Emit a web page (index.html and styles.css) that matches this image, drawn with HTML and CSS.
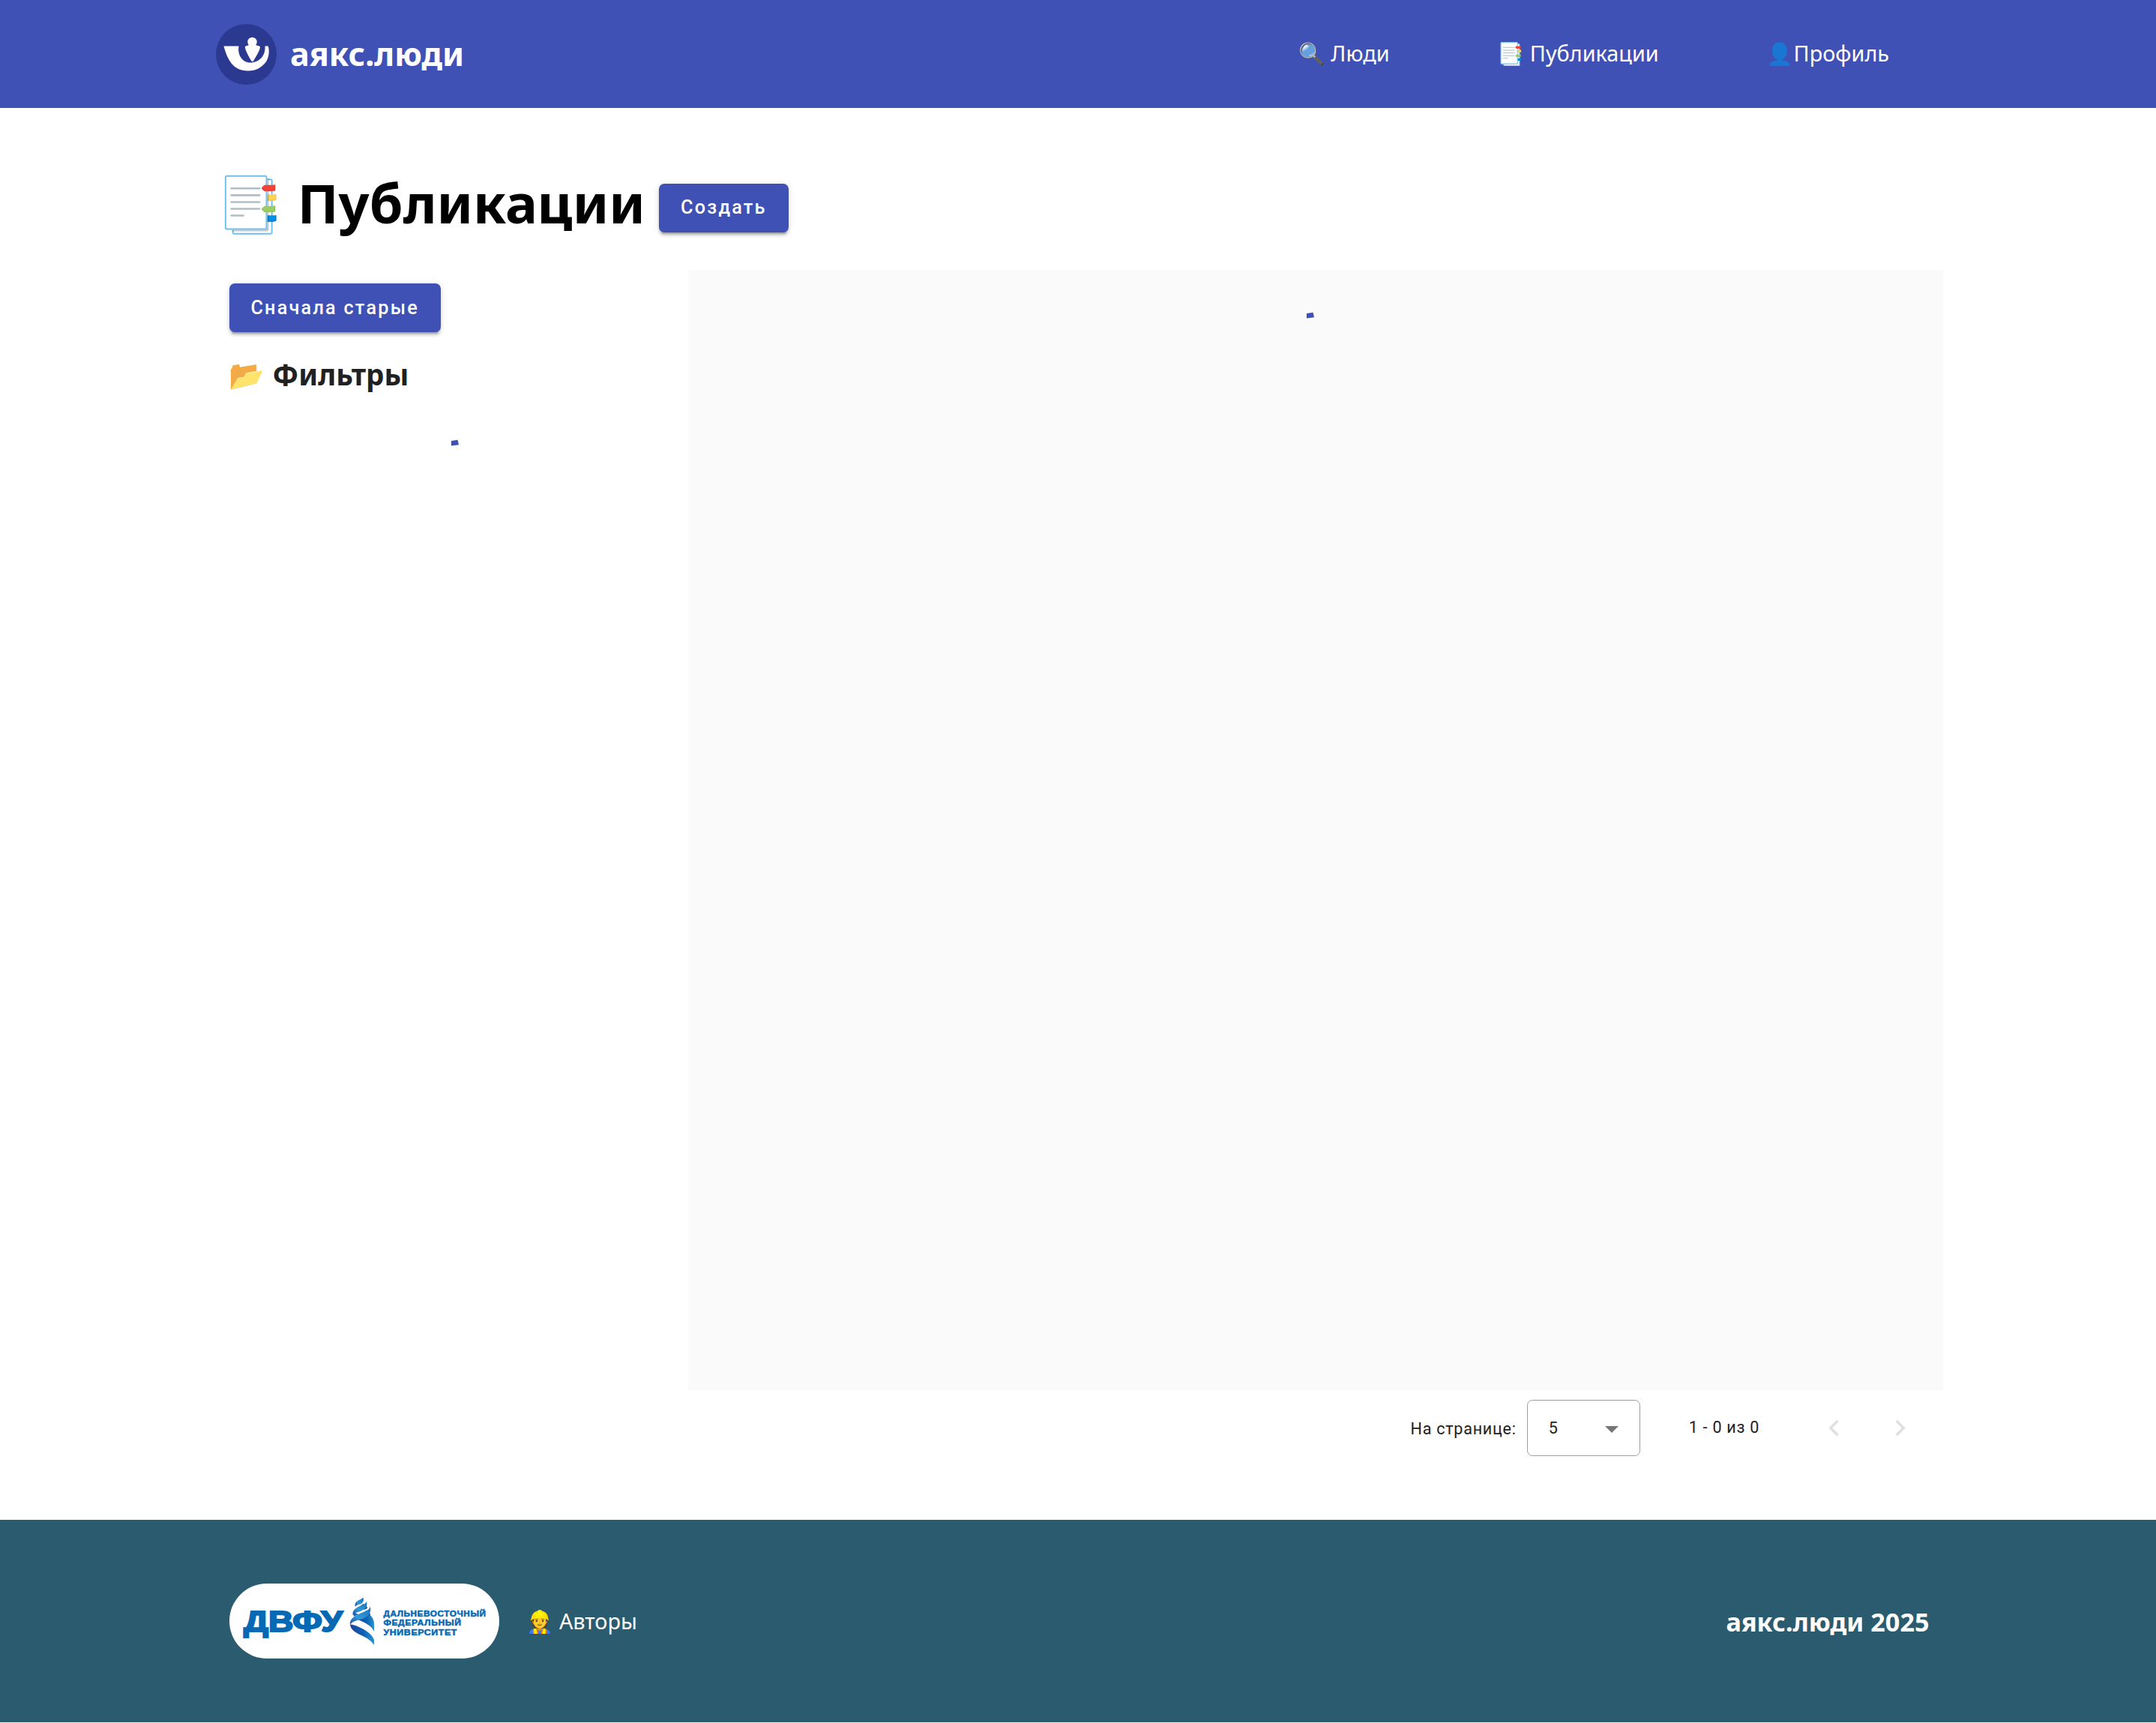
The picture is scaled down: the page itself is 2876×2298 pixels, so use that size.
FILE: index.html
```html
<!DOCTYPE html>
<html lang="ru">
<head>
<meta charset="utf-8">
<title>Публикации</title>
<link rel="stylesheet" href="styles.css">
</head>
<body>
<header class="header">
  <a class="brand">
    <svg class="brand-logo" viewBox="0 0 81 81">
      <circle cx="40.5" cy="40.5" r="40.5" fill="#2c3990"/>
      <path fill="#fff" d="M10.500 29.500H30.500C28.500 41 35 51.500 46 51.500C58 51.500 66.500 42 65.500 29.500H69.800C71.500 36 71 43 67.500 49.500C62 58 53 62.500 43 62.500C23 62.500 15.500 48 10.500 29.500Z"/>
      <circle cx="48.500" cy="24" r="6.200" fill="#fff"/>
      <path fill="#fff" d="M44.500 27H52.500C53.500 29.500 59 28.500 59 31C58.500 36 52 46 50 49.200Q48.700 51 47.400 49.200C45 46 39.500 36 38.800 31C38.800 28.500 43.500 29.500 44.500 27Z"/>
    </svg>
    <span class="brand-name">аякс.люди</span>
  </a>
  <nav class="nav">
    <a>🔍 Люди</a>
    <a>📑 Публикации</a>
    <a>👤Профиль</a>
  </nav>
</header>
<main class="main">
  <div class="title-row">
    <h1 class="title">📑 Публикации</h1>
    <button class="button">Создать</button>
  </div>
  <div class="columns">
    <aside class="sidebar">
      <button class="button">Сначала старые</button>
      <h3 class="filters">📂 Фильтры</h3>
      <div class="spinner spinner-side"><svg viewBox="0 0 12 10"><path d="M1 2L9.500 .8L11 7.200L1 8.500Z"/></svg></div>
    </aside>
    <section class="content">
      <div class="list">
        <div class="spinner spinner-list"><svg viewBox="0 0 12 10"><path d="M1 2L9.500 .8L11 7.200L1 8.500Z"/></svg></div>
      </div>
      <div class="paginator">
        <span class="page-label">На странице:</span>
        <div class="select"><span>5</span><i class="arrow"></i></div>
        <span class="range">1 - 0 из 0</span>
        <svg class="chevron" viewBox="0 0 24 24"><path d="M15.410 7.410L14 6l-6 6 6 6 1.410-1.410L10.830 12z"/></svg>
        <svg class="chevron" viewBox="0 0 24 24"><path d="M10 6L8.590 7.410 13.170 12l-4.580 4.590L10 18l6-6z"/></svg>
      </div>
    </section>
  </div>
</main>
<footer class="footer">
  <svg class="university" viewBox="0 0 360 100">
    <defs>
      <linearGradient id="band" x1="0" y1="1" x2="1" y2="0">
        <stop offset="0" stop-color="#2a3f9b"/><stop offset=".4" stop-color="#2f9ad6"/><stop offset="1" stop-color="#1f6fba"/>
      </linearGradient>
      <linearGradient id="tail" x1="0" y1="0" x2="1" y2="0">
        <stop offset="0" stop-color="#23409c"/><stop offset=".55" stop-color="#0b62b2"/><stop offset="1" stop-color="#2b93d1"/>
      </linearGradient>
    </defs>
    <rect width="360" height="100" rx="50" fill="#fff"/>
    <g class="university-text">
      <text x="19" y="64.200" font-size="38.500" stroke-width="2" textLength="132" lengthAdjust="spacingAndGlyphs">ДВФУ</text>
      <g class="university-name">
        <text x="205.500" y="43.600" textLength="137" lengthAdjust="spacingAndGlyphs">ДАЛЬНЕВОСТОЧНЫЙ</text>
        <text x="205.500" y="56.300" textLength="104" lengthAdjust="spacingAndGlyphs">ФЕДЕРАЛЬНЫЙ</text>
        <text x="205.500" y="68.700" textLength="98.500" lengthAdjust="spacingAndGlyphs">УНИВЕРСИТЕТ</text>
      </g>
    </g>
    <path fill="url(#tail)" d="M161 55C164 54 171 57 177 60C185 64 191 69 193 75V82C189 76 184 73 178 70C169 66 162 62 161 55Z"/>
    <path fill="url(#tail)" d="M171 48C179 51 190 56 193 64V52C192 46 189 42 184 41C180 44 176 46 171 48Z"/>
    <path fill="#1a62b2" d="M178 27C182 28 184 30 184 33L180 35L174 31ZM182 36C186 37 189 40 188 43L181 41ZM165 38L172 41L166 44Z"/>
    <path fill="url(#band)" d="M161 56C160 47 166 44 174 40C183 36 188 35 187.500 30C190 37 187 43 178 47C169 50 163 50 161 56Z"/>
    <path fill="url(#band)" d="M165 43C163 36 168 33 175 29.500C181 27 183 26 182.500 23C185 29 183 33 175 37C169 39 166 39 165 43Z"/>
    <path fill="url(#band)" d="M168 31C166 25 171 23 175 21C178 19.500 178 19 178 18C180 22 179 25 175 27.500C171 28 169 29 168 31Z"/>
  </svg>
  <a class="authors">👷 Авторы</a>
  <h3 class="copyright">аякс.люди 2025</h3>
</footer>
</body>
</html>
```
FILE: styles.css
```css
* { box-sizing: border-box; }
body {
  margin: 0;
  background: #fff;
  color: #212121;
  font-family: "Noto Sans", "Noto Color Emoji", sans-serif;
  font-size: 28.8px;
}
h1, h3 { margin: 0; }
.header {
  display: flex;
  align-items: center;
  justify-content: space-between;
  height: 144px;
  padding: 0 287.6px;
  background: #3f51b5;
  color: #fff;
}
.brand { display: flex; align-items: center; gap: 18.4px; }
.brand-logo { width: 81px; height: 81px; }
.brand-name { margin-bottom: 2px; font-size: 43.2px; font-weight: 700; }
.nav { display: flex; gap: 144px; padding: 0 68.4px 3px 0; }
.main { height: 1883px; padding: 72px 284px 0 287.6px; }
.title-row { display: flex; align-items: center; height: 112px; margin-bottom: 32px; gap: 18.5px; color: #000; }
.title { margin: -5px 0 0 .8px; font-size: 72px; line-height: 108px; }
.button {
  display: block;
  height: 65px;
  padding: 0 28.8px;
  border: 0;
  border-radius: 7.2px;
  background: #3f51b5;
  color: #fff;
  font: 500 25.2px/64px Roboto, sans-serif;
  letter-spacing: 2.25px;
  box-shadow: 0 5.4px 1.8px -3.6px rgba(0,0,0,.2), 0 3.6px 3.6px rgba(0,0,0,.14), 0 1.8px 9px rgba(0,0,0,.12);
}
.title-row .button { margin-top: 11px; padding-bottom: 2px; }
.columns { display: flex; }
.sidebar { width: 630px; padding: 18px; }
.filters { margin-top: 30px; font-size: 38.5px; line-height: 52px; }
.content { flex: 1; }
.list { height: 1494px; padding-top: 56px; background: #fafafa; }
.spinner { display: flex; justify-content: center; }
.spinner svg { width: 12px; height: 10px; fill: #3f51b5; }
.spinner-side { margin-top: 61px; padding-left: 9px; }
.spinner-list { padding-right: 14px; }
.paginator {
  display: flex;
  align-items: center;
  justify-content: flex-end;
  height: 101px;
  padding-right: 36px;
  font: 21.6px Roboto, sans-serif;
  letter-spacing: .72px;
}
.page-label { padding-top: 2px; }
.select {
  display: flex;
  align-items: center;
  justify-content: space-between;
  width: 151px;
  height: 75px;
  margin: 0 65px 0 14px;
  padding: 0 28px;
  border: 1px solid #9e9e9e;
  border-radius: 7.2px;
}
.arrow { margin-top: 4px; border: 9px solid transparent; border-top-color: #757575; border-bottom: 0; }
.range { margin-right: 78px; padding-bottom: 2px; }
.chevron { width: 43.2px; height: 43.2px; margin-right: 44.5px; fill: #e0e0e0; }
.chevron:last-child { margin-right: 0; }
.footer {
  display: flex;
  align-items: center;
  height: 270px;
  padding: 0 302.5px 0 305.6px;
  background: #2b5b6e;
  color: #fff;
}
.university { width: 360px; height: 100px; }
.university-text { fill: #0768b3; stroke: #0768b3; font-family: "Liberation Sans", Arial, sans-serif; font-weight: 700; }
.university-name { font-size: 10.5px; stroke-width: .5px; letter-spacing: .5px; }
.authors { margin: 0 0 2px 37px; }
.copyright { margin-left: auto; font-size: 34.2px; }
```
